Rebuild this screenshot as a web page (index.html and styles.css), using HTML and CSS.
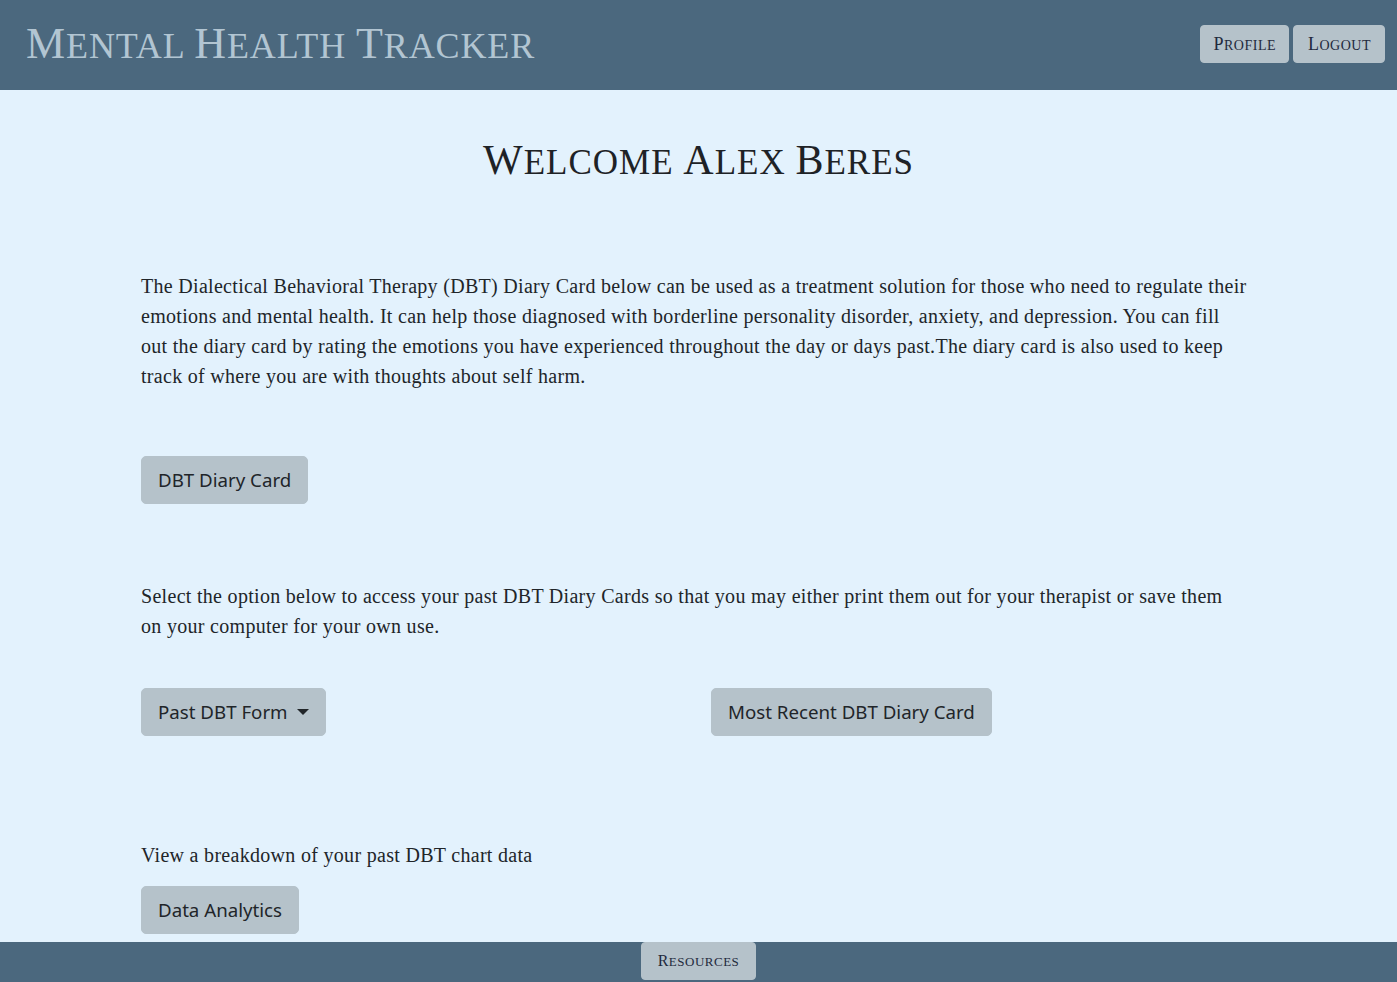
FILE: index.html
```html
<!DOCTYPE html>
<html lang="en">
<head>
<meta charset="utf-8">
<title>Mental Health Tracker</title>
<link rel="stylesheet" href="styles.css">
</head>
<body>
<div class="page">
  <header class="topbar">
    <div class="brand"><span class="cap">M</span>ental <span class="cap">H</span>ealth <span class="cap">T</span>racker</div>
    <nav class="top-actions">
      <button class="sc-btn"><span class="cap">P</span>rofile</button>
      <button class="sc-btn logout"><span class="cap">L</span>ogout</button>
    </nav>
  </header>

  <main class="content">
    <h1 class="welcome"><span class="cap">W</span>elcome <span class="cap">A</span>lex <span class="cap">B</span>eres</h1>

    <p class="intro">The Dialectical Behavioral Therapy (DBT) Diary Card below can be used as a treatment solution for those who need to regulate their emotions and mental health. It can help those diagnosed with borderline personality disorder, anxiety, and depression. You can fill out the diary card by rating the emotions you have experienced throughout the day or days past.The diary card is also used to keep track of where you are with thoughts about self harm.</p>

    <div class="btn-row first"><button class="btn-lg">DBT Diary Card</button></div>

    <p class="select">Select the option below to access your past DBT Diary Cards so that you may either print them out for your therapist or save them on your computer for your own use.</p>

    <div class="cols">
      <div class="col"><button class="btn-lg">Past DBT Form<span class="caret"></span></button></div>
      <div class="col"><button class="btn-lg">Most Recent DBT Diary Card</button></div>
    </div>

    <p class="view">View a breakdown of your past DBT chart data</p>
    <div class="btn-row"><button class="btn-lg">Data Analytics</button></div>
  </main>

  <footer class="bottombar">
    <button class="sc-btn res"><span class="cap">R</span>esources</button>
  </footer>
</div>
</body>
</html>
```

FILE: styles.css
```css
html, body {
  margin: 0;
  padding: 0;
}
body {
  background: #e3f2fd;
  color: #212529;
  font-family: "Liberation Serif", "Times New Roman", serif;
}
.page {
  min-height: 100vh;
  display: flex;
  flex-direction: column;
}
.topbar {
  height: 90px;
  background: #4b687e;
  display: flex;
  align-items: center;
  justify-content: space-between;
  padding: 0 12px 0 26px;
  box-sizing: border-box;
}
.brand {
  color: #b2c5d2;
  text-transform: uppercase;
  font-size: 36px;
  letter-spacing: 0.9px;
  line-height: 1;
  margin-top: -2px;
  white-space: nowrap;
}
.brand .cap { font-size: 44px; }

.top-actions {
  display: flex;
  gap: 4px;
  margin-top: -2px;
}
.sc-btn {
  background: #b5c2ca;
  border: 1px solid #b5c2ca;
  border-radius: 4px;
  color: #1f2a3d;
  font-family: "Liberation Serif", "Times New Roman", serif;
  text-transform: uppercase;
  font-size: 14px;
  letter-spacing: 0.5px;
  height: 38px;
  padding: 0 12px;
  cursor: pointer;
}
.sc-btn .cap { font-size: 18px; }
.sc-btn.logout { padding: 0 13px 0 14px; }

.content {
  flex: 1;
  width: 1110px;
  margin: 0 0 0 141px;
}
.welcome {
  margin: 43px 0 0;
  text-align: center;
  font-weight: 400;
  font-size: 35px;
  line-height: 55px;
  height: 55px;
  text-transform: uppercase;
  letter-spacing: 1px;
  color: #1e2226;
  padding-left: 5px;
}
.welcome .cap { font-size: 42px; }

.intro, .select, .view {
  font-size: 20px;
  letter-spacing: 0.3px;
  line-height: 30px;
  margin: 0;
}
.intro { margin-top: 83px; max-width: 1107px; }
.btn-row.first { margin-top: 65px; }
.select { margin-top: 77px; max-width: 1095px; }
.cols {
  display: grid;
  grid-template-columns: 570px 570px;
  margin-top: 47px;
}
.view { margin-top: 104px; }
.btn-row { margin-top: 16px; }

.btn-lg {
  background: #b5c2ca;
  border: 1px solid #b5c2ca;
  border-radius: 5px;
  color: #212529;
  font-family: "Noto Sans", "Open Sans", sans-serif;
  font-size: 18.7px;
  line-height: 30px;
  padding: 8px 16px;
  cursor: pointer;
  display: inline-flex;
  align-items: center;
}
.caret {
  display: inline-block;
  margin-left: 9px;
  width: 0;
  height: 0;
  border-left: 6px solid transparent;
  border-right: 6px solid transparent;
  border-top: 6px solid #212529;
}

.bottombar {
  height: 40px;
  background: #4b687e;
  display: flex;
  justify-content: center;
  margin-top: 8px;
}
.sc-btn.res {
  height: 38px;
  padding: 0 16px;
  font-size: 13px;
}
.sc-btn.res .cap { font-size: 16px; }
```
